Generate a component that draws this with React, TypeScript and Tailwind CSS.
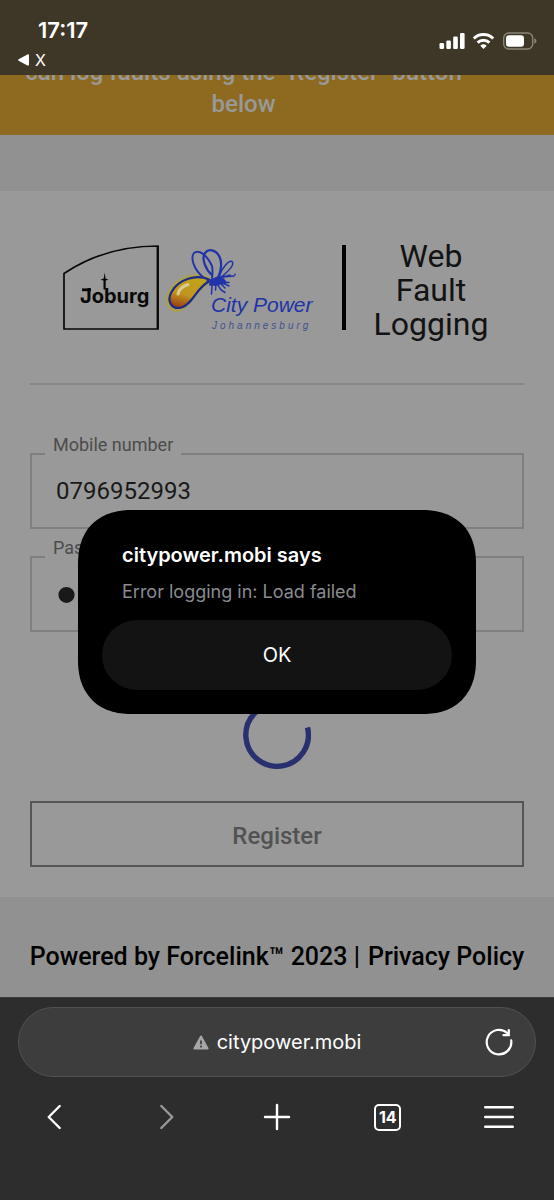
import React from "react";

function StatusBar() {
  return (
    <header className="flex h-[75px] shrink-0 items-start justify-between bg-[#3e3727] pl-[18px] pr-[17px] text-white">
      <div className="flex flex-col pt-[18px] font-['Inter',sans-serif]">
        <time className="pl-5 text-[22px] font-semibold leading-6">17:17</time>
        <a href="#back" className="mt-2 flex items-center gap-1.5 text-base leading-5">
          <svg width="11" height="12" viewBox="0 0 11 12" fill="currentColor" aria-hidden="true">
            <path d="M0.6 5.2 9.4.5Q11 0 11 1.4v9.2q0 1.4-1.6.9L.6 6.8Q-.3 6 .6 5.2Z" />
          </svg>
          X
        </a>
      </div>
      <svg className="mt-8" width="98" height="18" viewBox="0 0 98 18" fill="#fff" aria-label="Signal, Wi-Fi and battery">
        <rect x="0.5" y="11" width="4.6" height="6" rx="1.3" />
        <rect x="7.3" y="8.4" width="4.6" height="8.600" rx="1.3" />
        <rect x="14.2" y="4.600" width="4.6" height="12.4" rx="1.3" />
        <rect x="21" y="1" width="4.6" height="16" rx="1.3" />
        <g fill="none" stroke="#fff" strokeWidth="3">
          <path d="M34.800 6.500A14 14 0 0 1 54.200 6.500" />
          <path d="M38.600 10.600A8.600 8.600 0 0 1 50.400 10.600" />
        </g>
        <path d="M44.500 17l-3.200-3.300a4.700 4.700 0 0 1 6.400 0Z" />
        <rect x="64.700" y="1" width="29" height="16" rx="5" fill="none" stroke="#8b8579" strokeWidth="1.400" />
        <rect x="67" y="3.300" width="18" height="11.400" rx="3" />
        <path d="M95.300 6.300q2.200.8 2.200 2.700t-2.200 2.700Z" fill="#8b8579" />
      </svg>
    </header>
  );
}

function JoburgLogo() {
  return (
    <svg className="shrink-0" width="96" height="85" viewBox="0 0 96 85" role="img" aria-label="Joburg">
      <path d="M1 28.500C30 9 60 1 95 1V84H1Z" fill="none" stroke="#080808" strokeWidth="1.700" />
      <path d="M94.700 1V84" stroke="#080808" strokeWidth="2.200" />
      <text x="17" y="58" fontSize="20" fontWeight="700" fontFamily="Inter, sans-serif" fill="#080808">
        Joburg
      </text>
      <path d="M19 43.400h9v2.800h-9Z" fill="#080808" />
      <path d="M41.800 27.500l.7 6 3 1.200-2.800.9v9h-2.200v-9l-3-.9 3.200-1.200Z" fill="#080808" />
    </svg>
  );
}

function CityPowerLogo() {
  return (
    <svg className="ml-1.5 shrink-0" width="156" height="90" viewBox="0 0 156 90" role="img" aria-label="City Power Johannesburg">
      <defs>
        <linearGradient id="bulb" x1="0.7" y1="0" x2="0.35" y2="1">
          <stop offset="0" stopColor="#c0a51c" />
          <stop offset="0.600" stopColor="#c2951f" />
          <stop offset="1" stopColor="#9c4412" />
        </linearGradient>
      </defs>
      <path d="M43 35C30 29 13 34 6 48c-5 10 1 18 10 14 8-4 14-20 26-26Z" fill="#a99b55" stroke="#aba04f" strokeWidth="7" strokeLinejoin="round" />
      <path d="M44 34.500C31 29 14 34 6.500 47c-5 9 0 18 10 15.500C28 59 31 43 44 36.500Z" fill="url(#bulb)" stroke="#1b2a86" strokeWidth="2.200" strokeLinejoin="round" />
      <path d="M13 49c1-5 5-8 10-9.500" fill="none" stroke="#d8cc92" strokeWidth="3" strokeLinecap="round" />
      <g fill="none" stroke="#2033a8" strokeWidth="1.500" strokeLinecap="round">
        <path d="M39 33C29 25 25 13 29 8c5-4 13 2 18 13q1 5 0 12" strokeWidth="1.900" />
        <path d="M47 30C41 25 36 14 40 8c4-5 12-3 15 5q3 8-2 20" strokeWidth="2.200" />
        <path d="M54 32C57 22 64 15 67 16.500c3 3-3 9-10 15" />
        <path d="M42 36l17-5M45 40l14-6M52 34l13-4M57 32l12-1M56 37l8 .5M47 40l-.5 9M51 39l-.5 6M53 40l3 5 4 2.500M55 38l5 5M58 38l6 3" />
      </g>
      <path d="M45 35l8-4 6 3-2 5-7 2-6-1Z" fill="#2033a8" />
      <circle cx="58.500" cy="37" r="2.600" fill="#2033a8" />
      <circle cx="70" cy="29.500" r="0.9" fill="#2033a8" />
      <text x="46" y="67" fontSize="21" fontStyle="italic" fontFamily="Liberation Sans, Arial, sans-serif" fill="#2033a8">
        City Power
      </text>
      <text x="47" y="84" fontSize="10" fontStyle="italic" fontFamily="Liberation Sans, Arial, sans-serif" fill="#41518d" className="tracking-[3px]">
        Johannesburg
      </text>
    </svg>
  );
}

type FieldProps = { id: string; label: string; type: string; value: string; inputClass: string };

function Field({ id, label, type, value, inputClass }: FieldProps) {
  return (
    <div className="relative h-[76px] border-2 border-[#7f7f7f]">
      <label htmlFor={id} className="absolute -top-[22px] left-[13px] bg-[#999] px-2 text-lg leading-6 text-[#4c4c4c]">
        {label}
      </label>
      <input id={id} type={type} defaultValue={value} className={"h-full w-full bg-transparent px-6 text-[#191919] outline-none " + inputClass} />
    </div>
  );
}

function AlertDialog() {
  return (
    <section
      role="alertdialog"
      aria-labelledby="alert-title"
      aria-describedby="alert-text"
      className="absolute inset-x-[78px] top-[510px] rounded-[54px] bg-black px-6 pb-6 pt-8 font-['Inter',sans-serif] [corner-shape:superellipse(1.2)]"
    >
      <h2 id="alert-title" className="px-5 text-xl font-semibold leading-[26px] text-white">
        citypower.mobi says
      </h2>
      <p id="alert-text" className="mt-3 px-5 text-lg leading-6 text-[#8b8b90]">
        Error logging in: Load failed
      </p>
      <button type="button" className="mt-4 h-[70px] w-full rounded-[35px] bg-[#131314] text-xl text-white">
        OK
      </button>
    </section>
  );
}

function BrowserBar() {
  return (
    <nav aria-label="Browser" className="flex grow flex-col border-t border-[#3a3a3a] bg-[#2d2d2d] pt-[9px] font-['Inter',sans-serif] text-white">
      <div className="relative mx-[18px] flex h-[70px] items-center justify-center rounded-[40px] border border-[#515152] bg-[#3d3d3e]">
        <a href="#site" className="flex items-center gap-2 text-xl">
          <svg width="16" height="15" viewBox="0 0 16 15" aria-hidden="true">
            <path d="M8 1.500 14.600 13.500H1.400Z" fill="#a6a6a8" stroke="#a6a6a8" strokeWidth="2" strokeLinejoin="round" />
            <path d="M8 5.500v3.700M8 10.600v1.800" stroke="#3d3d3e" strokeWidth="1.700" />
          </svg>
          citypower.mobi
        </a>
        <button type="button" aria-label="Reload" className="absolute right-[21px]">
          <svg width="30" height="30" viewBox="0 0 30 30" fill="none" stroke="#fff" strokeWidth="2.200" strokeLinecap="round">
            <path d="M27.200 13.400A12.300 12.300 0 1 1 23.500 6.200" />
            <path d="M24.800 3v5.200h-5.300" />
          </svg>
        </button>
      </div>
      <div className="mt-5 grid h-10 grid-cols-5 place-items-center">
        <button type="button" aria-label="Back">
          <svg width="30" height="30" viewBox="0 0 30 30" fill="none" stroke="#fff" strokeWidth="2.400" strokeLinecap="round" strokeLinejoin="round">
            <path d="M19.700 4 8.700 15l11 11" />
          </svg>
        </button>
        <button type="button" aria-label="Forward">
          <svg width="30" height="30" viewBox="0 0 30 30" fill="none" stroke="#99999b" strokeWidth="2.400" strokeLinecap="round" strokeLinejoin="round">
            <path d="M10.300 4l11 11-11 11" />
          </svg>
        </button>
        <button type="button" aria-label="New tab">
          <svg width="30" height="30" viewBox="0 0 30 30" fill="none" stroke="#fff" strokeWidth="2.400" strokeLinecap="round">
            <path d="M15 3v24M3 15h24" />
          </svg>
        </button>
        <button type="button" aria-label="Tabs" className="flex size-[27px] items-center justify-center rounded-[5px] border-2 border-white text-base font-bold leading-none">
          14
        </button>
        <button type="button" aria-label="Menu">
          <svg width="30" height="30" viewBox="0 0 30 30" fill="none" stroke="#fff" strokeWidth="2.400" strokeLinecap="round">
            <path d="M1.200 5.300h27.600M1.200 15h27.600M1.200 24.700h27.600" />
          </svg>
        </button>
      </div>
    </nav>
  );
}

export default function App() {
  return (
    <div className="relative flex min-h-screen flex-col bg-[#919191] font-['Roboto',sans-serif]">
      <StatusBar />
      <div className="flex h-[60px] shrink-0 flex-col justify-end overflow-hidden bg-[#8d6a20] pb-[15px] pr-[67px] text-center text-2xl font-medium leading-8 text-[#999]">
        <p className="shrink-0">
          can log faults using the "Register" button
          <br />
          below
        </p>
      </div>

      <main className="mt-14 bg-[#999] px-[30px] pb-[30px] pt-[54px]">
        <div className="flex items-start border-b-2 border-[#878787] pb-[42px] pl-[33px]">
          <JoburgLogo />
          <CityPowerLogo />
          <div className="ml-[21px] h-[85px] w-1 shrink-0 bg-black" />
          <h1 className="-mt-1.5 grow pr-2 text-center text-[32px] leading-[34px] text-[#131313]">
            Web
            <br />
            Fault
            <br />
            Logging
          </h1>
        </div>

        <form className="mt-[68px] flex flex-col" onSubmit={(e) => e.preventDefault()}>
          <div className="flex flex-col gap-[27px]">
            <Field id="mobile" label="Mobile number" type="tel" value="0796952993" inputClass="text-2xl" />
            <Field id="password" label="Password" type="password" value="password" inputClass="font-['Liberation_Sans',sans-serif] text-[60px]" />
          </div>
          <svg className="mx-auto mt-[69px]" width="68" height="68" viewBox="0 0 68 68" fill="none" role="img" aria-label="Loading">
            <path d="M64.500 26.500A31.300 31.300 0 1 1 34 2.700" stroke="#29306f" strokeWidth="5.400" />
          </svg>
          <button type="button" className="mt-8 h-[66px] border-2 border-[#555] pt-1 text-2xl font-medium text-[#525252]">
            Register
          </button>
        </form>
      </main>

      <footer className="flex h-[100px] shrink-0 items-center justify-center gap-2 whitespace-nowrap pt-5 text-[25px] font-medium text-black">
        <span>Powered by Forcelink™ 2023 |</span>
        <a href="#privacy">Privacy Policy</a>
      </footer>

      <BrowserBar />
      <AlertDialog />
    </div>
  );
}
